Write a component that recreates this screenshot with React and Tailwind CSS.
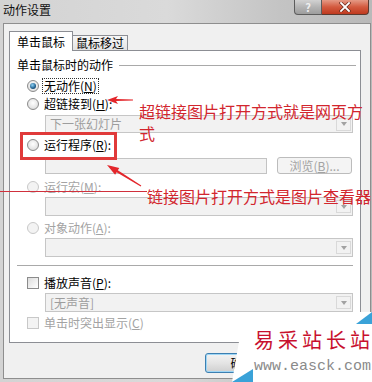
import React from 'react';

const Radio = ({ checked, disabled }) => (
  <span
    className={`flex items-center justify-center w-[12px] h-[12px] rounded-full border shrink-0 ${
      disabled
        ? 'border-[#c8c8c8] bg-[#f3f3f3]'
        : 'border-[#8b8b8b] bg-[radial-gradient(circle_at_50%_40%,#ffffff,#e6e6e6_60%,#cfcfcf)]'
    }`}
  >
    {checked && (
      <span className="w-[6px] h-[6px] rounded-full bg-[radial-gradient(circle_at_40%_35%,#8fd3f7,#1f5f8d_60%,#0b2b46)]" />
    )}
  </span>
);

const Check = ({ disabled }) => (
  <span
    className={`w-[12px] h-[12px] border shrink-0 ${
      disabled
        ? 'border-[#c8c8c8] bg-[#f3f3f3]'
        : 'border-[#8b8b8b] bg-[linear-gradient(135deg,#dcdcdc,#ffffff)]'
    }`}
  />
);

const Option = ({ kind = 'radio', label, accel, tail = '', disabled, checked, focus, className = '' }) => (
  <div className={`flex items-center h-[16px] pl-[17px] gap-[4px] ${className}`}>
    {kind === 'radio' ? <Radio checked={checked} disabled={disabled} /> : <Check disabled={disabled} />}
    <span
      className={`text-[12px] leading-[14px] px-[1px] whitespace-nowrap ${disabled ? 'text-[#a3a3a3]' : 'text-black'} ${
        focus ? 'outline-1 outline-dotted outline-[#333]' : ''
      }`}
    >
      {label}(<u>{accel}</u>){tail}
    </span>
  </div>
);

const Combo = ({ text = '', className = '' }) => (
  <div className={`ml-[35px] w-[308px] flex items-center border border-[#c6c6c6] bg-[#f2f2f2] ${className}`}>
    <span className="flex-1 pl-[4px] text-[12px] leading-[14px] text-[#9d9d9d]">{text}</span>
    <span className="mr-[1px] w-[15px] h-[13px] border border-[#d9d9d9] flex items-center justify-center">
      <span className="border-x-[3px] border-x-transparent border-t-[4px] border-t-[#a2a2a2]" />
    </span>
  </div>
);

export default function App() {
  return (
    <div className="relative w-[372px] h-[382px] overflow-hidden flex flex-col bg-[linear-gradient(90deg,#d3d3d3,#dadada_45%,#c4c4c4_75%,#b9b9b9)] font-['Noto_Sans_CJK_SC','Noto_Sans',sans-serif]">
      {/* title bar */}
      <div className="h-[23px] flex items-start shrink-0">
        <span className="pl-[3px] pt-[3px] text-[12px] leading-[14px] text-[#111]">动作设置</span>
        <div className="ml-[243px] flex">
          <div className="w-[28px] h-[15px] rounded-bl-[4px] border border-t-0 border-[#5c5c5c] bg-[linear-gradient(180deg,#d2d2d2,#b4b4b4_50%,#9d9d9d)] flex items-center justify-center text-[11px] leading-[11px] font-bold text-[#efefef]">
            ?
          </div>
          <div className="w-[47px] h-[15px] rounded-br-[4px] border border-l-0 border-t-0 border-[#5c3a30] bg-[linear-gradient(180deg,#e59a86,#d35a3f_50%,#bf3a1f)] flex items-center justify-center">
            <svg width="12" height="10" viewBox="0 0 12 10">
              <path d="M2 1 L10 9 M10 1 L2 9" stroke="#6a2a1c" strokeWidth="3.2" strokeLinecap="square" />
              <path d="M2 1 L10 9 M10 1 L2 9" stroke="#ffffff" strokeWidth="1.8" strokeLinecap="square" />
            </svg>
          </div>
        </div>
      </div>

      {/* client area */}
      <div className="ml-[3px] w-[368px] h-[356px] border border-[#8e8e8e] bg-[#f0f0f0] pt-[7px] pl-[5px] flex flex-col">
        {/* tabs */}
        <div className="h-[20px] flex items-end">
          <div className="relative z-10 w-[64px] h-[20px] bg-white border border-b-0 border-[#8c8e94] flex items-center justify-center text-[12px] leading-[14px] text-black">
            单击鼠标
          </div>
          <div className="w-[55px] h-[16px] border border-l-0 border-[#8c8e94] bg-[linear-gradient(180deg,#f6f6f6,#e3e3e3)] flex items-center justify-center text-[12px] leading-[14px] text-black">
            鼠标移过
          </div>
        </div>

        {/* tab panel */}
        <div className="mt-[-1px] w-[352px] h-[293px] bg-white border border-[#8c8e94] flex flex-col">
          <div className="mt-[6px] h-[16px] flex items-center pl-[7px]">
            <span className="text-[12px] leading-[14px] text-black whitespace-nowrap">单击鼠标时的动作</span>
            <span className="ml-[6px] w-[237px] h-px bg-[#a9a9a9]" />
          </div>

          <Option className="mt-[5px]" label="无动作" accel="N" checked focus />
          <Option className="mt-[2px]" label="超链接到" accel="H" tail=":" />
          <Combo className="mt-[3px] h-[18px]" text="下一张幻灯片" />
          <Option className="mt-[4px]" label="运行程序" accel="R" tail=":" />
          <div className="mt-[4px] h-[17px] flex items-center">
            <div className="ml-[35px] w-[222px] h-[16px] border border-[#c3c3c3] bg-[#f2f2f2]" />
            <div className="ml-[10px] w-[75px] h-[17px] rounded-[3px] border border-[#bcbcbc] bg-[#f4f4f4] flex items-center justify-center text-[12px] leading-[14px] text-[#a3a3a3]">
              浏览(<u>B</u>)...
            </div>
          </div>
          <Option className="mt-[5px]" label="运行宏" accel="M" tail=":" disabled />
          <Combo className="mt-[2px] h-[19px]" />
          <Option className="mt-[4px]" label="对象动作" accel="A" tail=":" disabled />
          <Combo className="mt-[2px] h-[19px]" />
          <div className="mt-[8px] ml-[7px] w-[336px] h-px bg-[#a9a9a9]" />
          <Option className="mt-[9px]" kind="check" label="播放声音" accel="P" tail=":" />
          <Combo className="mt-[2px] h-[19px]" text="[无声音]" />
          <Option className="mt-[3px]" kind="check" label="单击时突出显示" accel="C" disabled />
        </div>

        {/* footer */}
        <div className="mt-[10px] ml-[196px] w-[75px] h-[20px] rounded-[3px] border border-[#3c7fb1] bg-[linear-gradient(180deg,#f3f3f3,#e4e4e4_50%,#cfcfcf)] shadow-[inset_0_0_0_1px_#9fd6f5] flex items-center justify-center text-[12px] leading-[14px] text-black">
          确定
        </div>
      </div>

      {/* annotations */}
      <div className="absolute left-[20px] top-[132px] w-[97px] h-[28px] border-[3px] border-[#e03a3a]" />
      <svg className="absolute left-0 top-0 pointer-events-none" width="372" height="382" viewBox="0 0 372 382">
        <polygon points="107,100 118,96 116,99 133,99.6 133,100.4 116,101 118,104" fill="#e3262b" />
        <polygon
          points="107,165 119.3,167.9 117.8,170.3 141.3,185.6 140.7,186.4 116.6,172.3 115.1,174.7"
          fill="#e3262b"
        />
        <rect x="0" y="191" width="147" height="1" fill="#d0303c" />
      </svg>
      <div className="absolute left-[139px] top-[100px] text-[16px] leading-[22px] text-[#d2262e] whitespace-nowrap">
        <div>超链接图片打开方式就是网页方</div>
        <div>式</div>
      </div>
      <div className="absolute left-[147px] top-[186px] text-[16px] leading-[20px] text-[#d2262e] whitespace-nowrap">
        链接图片打开方式是图片查看器
      </div>

      {/* watermark */}
      <div className="absolute left-[232px] top-[312px] w-[140px] h-[70px] bg-white [clip-path:polygon(9px_18px,124px_0,140px_0,140px_70px,0_70px)]" />
      <svg className="absolute left-0 top-0 pointer-events-none" width="372" height="382" viewBox="0 0 372 382">
        <polygon points="356,324 372,312 372,324" fill="#3aa2d8" />
        <polygon points="232,382 253,369 253,382" fill="#3aa2d8" />
      </svg>
      <div className="absolute left-[254px] top-[328px] text-[20px] leading-[24px] text-[#c8102e] whitespace-nowrap">
        <span className="tracking-[4px]">易采站长</span>站
      </div>
      <div className="absolute left-[254px] top-[358px] font-['Liberation_Mono',monospace] text-[15px] leading-[18px] text-[#8a8a8a] whitespace-nowrap">
        www.easck.com
      </div>
    </div>
  );
}
